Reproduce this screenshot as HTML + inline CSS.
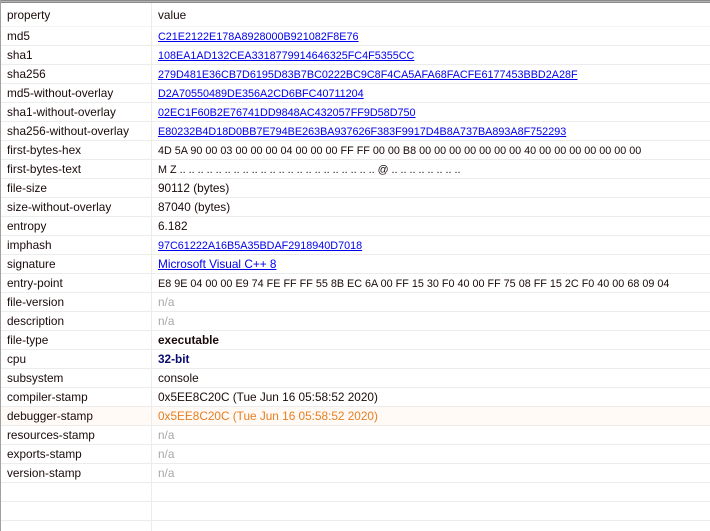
<!DOCTYPE html>
<html><head><meta charset="utf-8"><style>
html,body{margin:0;padding:0;background:#fff;width:710px;height:531px;overflow:hidden}
body{font-family:"Liberation Sans",sans-serif;font-size:11.8px;color:#1a0a0a;position:relative}
.top{position:absolute;left:0;top:0;width:710px;height:3px;background:#8a8a8a}
.top2{position:absolute;left:0;top:1px;width:710px;height:1px;background:#b5b5b5}
.lb{position:absolute;left:0;top:0;width:1px;height:531px;background:#a0a0a0}
.vd{position:absolute;left:151px;top:3px;width:1px;height:528px;background:#ececec}
.r{position:absolute;left:1px;width:709px;height:18px;border-bottom:1px solid #ececec}
.r span{position:absolute;top:2px;white-space:nowrap;line-height:15px}
.p{left:6px}.v{left:157px}
a{color:#0000ee;text-decoration:underline}
.h{font-size:10.8px;top:3px!important}
.na{color:#a8a8a8}
.b{font-weight:bold}
.cpu{font-weight:bold;color:#0a0a6e}
.or{color:#e67e22}
</style></head><body>
<div class="top"></div><div class="top2"></div>
<div class="r" style="top:3px;height:23px;border-bottom:1px solid #f4f4f4"><span class="p" style="top:5px">property</span><span class="v" style="top:5px">value</span></div>
<div class="r" style="top:27px"><span class="p">md5</span><span class="v h"><a>C21E2122E178A8928000B921082F8E76</a></span></div>
<div class="r" style="top:46px"><span class="p">sha1</span><span class="v h"><a>108EA1AD132CEA3318779914646325FC4F5355CC</a></span></div>
<div class="r" style="top:65px"><span class="p">sha256</span><span class="v h"><a>279D481E36CB7D6195D83B7BC0222BC9C8F4CA5AFA68FACFE6177453BBD2A28F</a></span></div>
<div class="r" style="top:84px"><span class="p">md5-without-overlay</span><span class="v h"><a>D2A70550489DE356A2CD6BFC40711204</a></span></div>
<div class="r" style="top:103px"><span class="p">sha1-without-overlay</span><span class="v h"><a>02EC1F60B2E76741DD9848AC432057FF9D58D750</a></span></div>
<div class="r" style="top:122px"><span class="p">sha256-without-overlay</span><span class="v h"><a>E80232B4D18D0BB7E794BE263BA937626F383F9917D4B8A737BA893A8F752293</a></span></div>
<div class="r" style="top:141px"><span class="p">first-bytes-hex</span><span class="v h">4D 5A 90 00 03 00 00 00 04 00 00 00 FF FF 00 00 B8 00 00 00 00 00 00 00 40 00 00 00 00 00 00 00</span></div>
<div class="r" style="top:160px"><span class="p">first-bytes-text</span><span class="v h">M Z .. .. .. .. .. .. .. .. .. .. .. .. .. .. .. .. .. .. .. .. .. .. @ .. .. .. .. .. .. .. ..</span></div>
<div class="r" style="top:179px"><span class="p">file-size</span><span class="v">90112 (bytes)</span></div>
<div class="r" style="top:198px"><span class="p">size-without-overlay</span><span class="v">87040 (bytes)</span></div>
<div class="r" style="top:217px"><span class="p">entropy</span><span class="v">6.182</span></div>
<div class="r" style="top:236px"><span class="p">imphash</span><span class="v h"><a>97C61222A16B5A35BDAF2918940D7018</a></span></div>
<div class="r" style="top:255px"><span class="p">signature</span><span class="v"><a>Microsoft Visual C++ 8</a></span></div>
<div class="r" style="top:274px"><span class="p">entry-point</span><span class="v h">E8 9E 04 00 00 E9 74 FE FF FF 55 8B EC 6A 00 FF 15 30 F0 40 00 FF 75 08 FF 15 2C F0 40 00 68 09 04</span></div>
<div class="r" style="top:293px"><span class="p">file-version</span><span class="v na">n/a</span></div>
<div class="r" style="top:312px"><span class="p">description</span><span class="v na">n/a</span></div>
<div class="r" style="top:331px"><span class="p">file-type</span><span class="v b">executable</span></div>
<div class="r" style="top:350px"><span class="p">cpu</span><span class="v cpu">32-bit</span></div>
<div class="r" style="top:369px"><span class="p">subsystem</span><span class="v">console</span></div>
<div class="r" style="top:388px"><span class="p">compiler-stamp</span><span class="v">0x5EE8C20C (Tue Jun 16 05:58:52 2020)</span></div>
<div class="r" style="top:407px;background:#fffaf5"><span class="p">debugger-stamp</span><span class="v or">0x5EE8C20C (Tue Jun 16 05:58:52 2020)</span></div>
<div class="r" style="top:426px"><span class="p">resources-stamp</span><span class="v na">n/a</span></div>
<div class="r" style="top:445px"><span class="p">exports-stamp</span><span class="v na">n/a</span></div>
<div class="r" style="top:464px"><span class="p">version-stamp</span><span class="v na">n/a</span></div>
<div class="r" style="top:483px"></div>
<div class="r" style="top:502px"></div>
<div class="vd"></div>
<div class="lb"></div>
</body></html>
